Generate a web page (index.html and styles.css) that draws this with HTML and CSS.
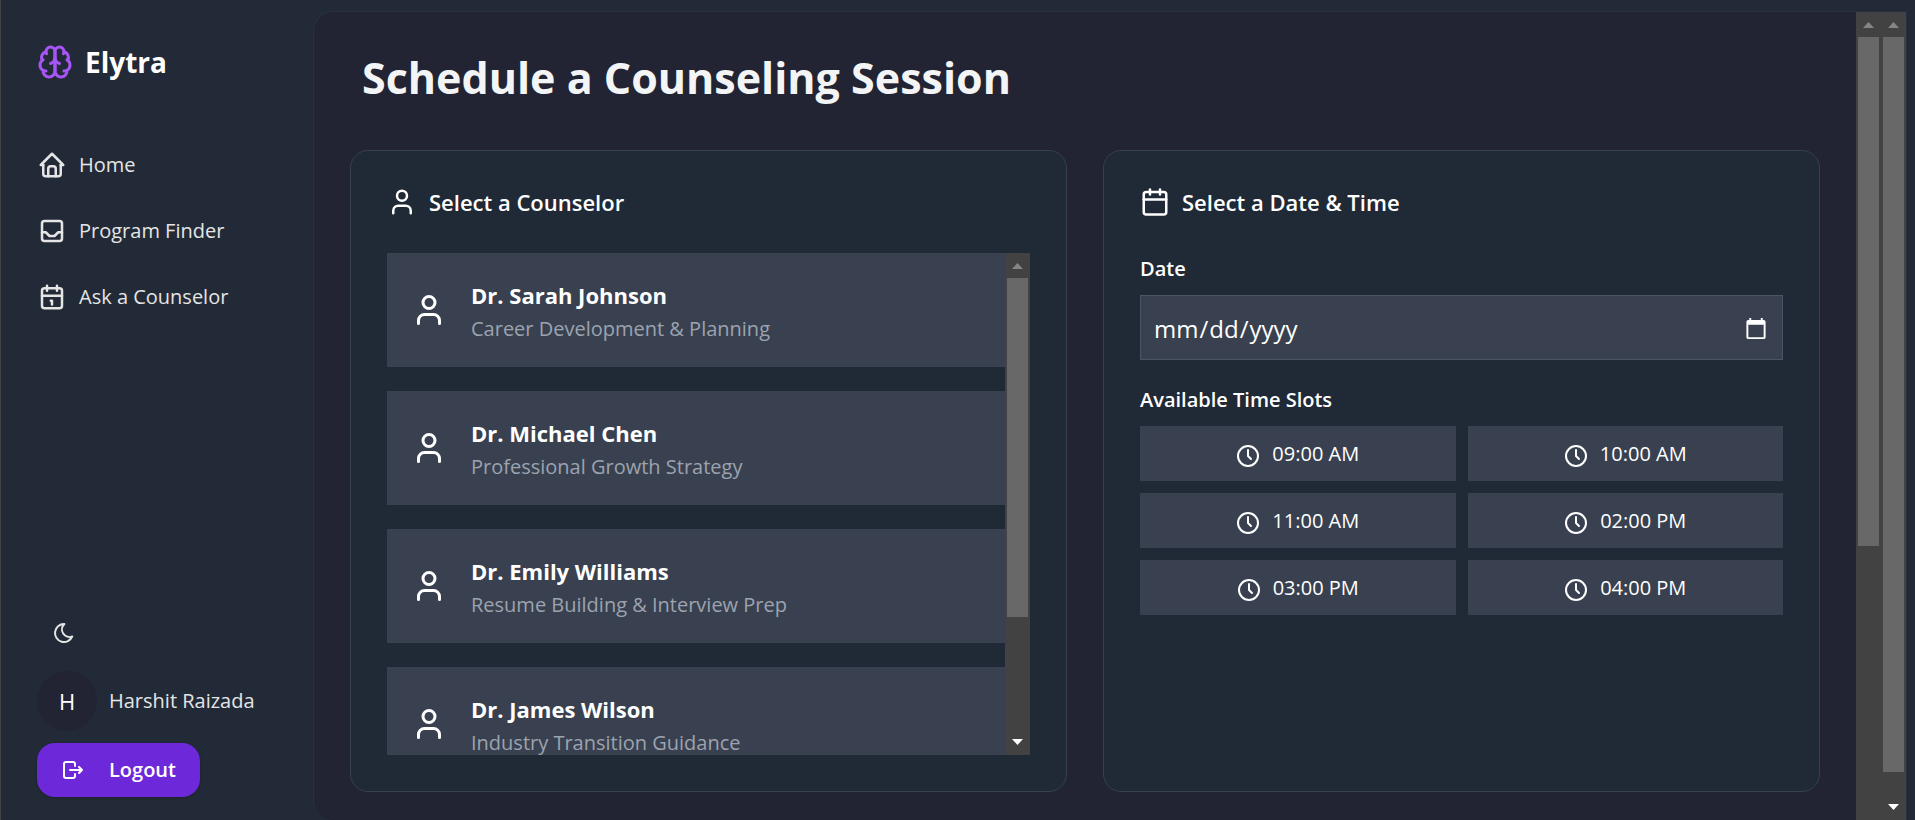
FILE: index.html
```html
<!DOCTYPE html>
<html lang="en">
<head>
<meta charset="utf-8">
<title>Elytra – Schedule a Counseling Session</title>
<link rel="stylesheet" href="styles.css">
</head>
<body>
<svg class="sprite" aria-hidden="true">
  <symbol id="user" viewBox="0 0 24 24"><path d="M19 21v-2a4 4 0 0 0-4-4H9a4 4 0 0 0-4 4v2"/><circle cx="12" cy="7" r="4"/></symbol>
  <symbol id="clock" viewBox="0 0 24 24"><circle cx="12" cy="12" r="10"/><path d="M12 6v6l3 3"/></symbol>
  <symbol id="arrow-up" viewBox="0 0 11 6"><path d="M5.5 0 11 6H0z"/></symbol>
  <symbol id="arrow-down" viewBox="0 0 11 6"><path d="M0 0h11L5.5 6z"/></symbol>
</svg>
<div class="app">
  <aside class="sidebar">
    <div>
      <a class="brand" href="#">
        <svg class="icon icon-lg" viewBox="0 0 24 24"><path d="M12 5a3 3 0 1 0-5.997.125 4 4 0 0 0-2.526 5.77 4 4 0 0 0 .556 6.588A4 4 0 1 0 12 18Z"/><path d="M12 5a3 3 0 1 1 5.997.125 4 4 0 0 1 2.526 5.77 4 4 0 0 1-.556 6.588A4 4 0 1 1 12 18Z"/><path d="M15 13a4.5 4.5 0 0 1-3-4 4.5 4.5 0 0 1-3 4"/><path d="M17.599 6.5a3 3 0 0 0 .399-1.375M6.003 5.125A3 3 0 0 0 6.401 6.5M3.477 10.896a4 4 0 0 1 .585-.396M19.938 10.5a4 4 0 0 1 .585.396M6 18a4 4 0 0 1-1.967-.516M19.967 17.484A4 4 0 0 1 18 18"/></svg>
        <span>Elytra</span>
      </a>
      <nav class="nav">
        <a href="#"><svg class="icon icon-md" viewBox="0 0 24 24"><path d="M5 12H3l9-9 9 9h-2"/><path d="M5 12v7a2 2 0 0 0 2 2h10a2 2 0 0 0 2-2v-7"/><path d="M9 21v-6a2 2 0 0 1 2-2h2a2 2 0 0 1 2 2v6"/></svg>Home</a>
        <a href="#"><svg class="icon icon-md" viewBox="0 0 24 24"><rect x="4" y="4" width="16" height="16" rx="2"/><path d="M4 13h3l3 3h4l3-3h3"/></svg>Program Finder</a>
        <a href="#"><svg class="icon icon-md" viewBox="0 0 24 24"><rect x="4" y="5" width="16" height="16" rx="2"/><path d="M16 3v4M8 3v4M4 11h16M11 15h1M12 15v3"/></svg>Ask a Counselor</a>
      </nav>
    </div>
    <div class="account">
      <button class="theme" type="button" aria-label="Toggle dark mode"><svg class="icon icon-sm" viewBox="0 0 24 24"><path d="M12 3c.132 0 .263 0 .393 0a7.5 7.5 0 0 0 7.92 12.446A9 9 0 1 1 12 2.992z"/></svg></button>
      <a class="profile" href="#"><span class="avatar">H</span>Harshit Raizada</a>
      <button class="logout" type="button"><svg class="icon icon-sm" viewBox="0 0 24 24"><path d="M14 8V6a2 2 0 0 0-2-2H5a2 2 0 0 0-2 2v12a2 2 0 0 0 2 2h7a2 2 0 0 0 2-2v-2"/><path d="M9 12h12l-3-3M18 15l3-3"/></svg>Logout</button>
    </div>
  </aside>
  <main class="panel">
    <div class="content">
      <h1>Schedule a Counseling Session</h1>
      <div class="cards">
        <section class="card">
          <h2><svg class="icon icon-md"><use href="#user"/></svg>Select a Counselor</h2>
          <div class="scroller">
            <div class="list">
              <button class="counselor" type="button"><svg class="icon icon-lg"><use href="#user"/></svg><span><strong>Dr. Sarah Johnson</strong><small>Career Development &amp; Planning</small></span></button>
              <button class="counselor" type="button"><svg class="icon icon-lg"><use href="#user"/></svg><span><strong>Dr. Michael Chen</strong><small>Professional Growth Strategy</small></span></button>
              <button class="counselor" type="button"><svg class="icon icon-lg"><use href="#user"/></svg><span><strong>Dr. Emily Williams</strong><small>Resume Building &amp; Interview Prep</small></span></button>
              <button class="counselor" type="button"><svg class="icon icon-lg"><use href="#user"/></svg><span><strong>Dr. James Wilson</strong><small>Industry Transition Guidance</small></span></button>
            </div>
            <div class="bar" aria-hidden="true"><svg class="up"><use href="#arrow-up"/></svg><div class="track"><div class="thumb thumb-list"></div></div><svg class="down"><use href="#arrow-down"/></svg></div>
          </div>
        </section>
        <section class="card">
          <h2><svg class="icon icon-md" viewBox="0 0 24 24"><rect x="3" y="4" width="18" height="18" rx="2"/><path d="M16 2v4M8 2v4M3 10h18"/></svg>Select a Date &amp; Time</h2>
          <label class="label" for="date">Date</label>
          <input class="date" id="date" type="date">
          <h3 class="label" id="slots">Available Time Slots</h3>
          <div class="slots" role="group" aria-labelledby="slots">
            <button type="button"><svg class="icon icon-sm"><use href="#clock"/></svg>09:00 AM</button>
            <button type="button"><svg class="icon icon-sm"><use href="#clock"/></svg>10:00 AM</button>
            <button type="button"><svg class="icon icon-sm"><use href="#clock"/></svg>11:00 AM</button>
            <button type="button"><svg class="icon icon-sm"><use href="#clock"/></svg>02:00 PM</button>
            <button type="button"><svg class="icon icon-sm"><use href="#clock"/></svg>03:00 PM</button>
            <button type="button"><svg class="icon icon-sm"><use href="#clock"/></svg>04:00 PM</button>
          </div>
        </section>
      </div>
    </div>
    <div class="bar" aria-hidden="true"><svg class="up"><use href="#arrow-up"/></svg><div class="track"><div class="thumb thumb-inner"></div></div></div>
    <div class="bar" aria-hidden="true"><svg class="up"><use href="#arrow-up"/></svg><div class="track"><div class="thumb thumb-outer"></div></div><svg class="down"><use href="#arrow-down"/></svg></div>
  </main>
</div>
</body>
</html>
```
FILE: styles.css
```css
* { box-sizing: border-box; }
body {
  margin: 0;
  background: #222a37;
  color: #fff;
  font-family: "Segoe UI", "Open Sans", "Noto Sans", sans-serif;
  font-size: 20px;
  line-height: 30px;
}
a { color: inherit; text-decoration: none; }
button { border: 0; color: inherit; font: inherit; cursor: pointer; }
h1, h2, h3 { margin: 0; }
.sprite { position: absolute; width: 0; height: 0; }

.icon {
  flex: none;
  fill: none;
  stroke: currentColor;
  stroke-width: 2;
  stroke-linecap: round;
  stroke-linejoin: round;
}
.icon-sm { width: 24px; height: 24px; }
.icon-md { width: 30px; height: 30px; }
.icon-lg { width: 36px; height: 36px; }

.app {
  display: flex;
  height: 100vh;
  overflow: hidden;
  border-left: 1px solid #3f4145;
}

.sidebar {
  display: flex;
  flex: none;
  flex-direction: column;
  justify-content: space-between;
  width: 312px;
  padding: 44px 36px 23px;
  color: #e5e5e5;
}
.brand { display: flex; align-items: center; gap: 12px; color: #fff; font-size: 28px; font-weight: 700; line-height: 36px; }
.brand .icon { color: #a855f7; }
.nav { display: flex; flex-direction: column; gap: 36px; margin-top: 70px; }
.nav a { display: flex; align-items: center; gap: 12px; }

.account { display: flex; flex-direction: column; align-items: flex-start; }
.theme { display: flex; padding: 14px 15px; background: none; }
.profile { display: flex; align-items: center; gap: 12px; margin: 12px 0; }
.avatar { display: grid; place-items: center; width: 60px; height: 60px; border-radius: 50%; background: #222433; color: #fff; font-size: 22px; }
.logout {
  display: flex;
  align-items: center;
  gap: 24px;
  padding: 12px 24px;
  border-radius: 18px;
  background: #6d28d9;
  color: #fff;
  font-weight: 600;
  box-shadow: 0 1px 3px rgb(0 0 0 / 20%);
}

.panel {
  display: flex;
  flex: 1;
  min-width: 0;
  margin: 11px 8px 0 0;
  overflow: hidden;
  border: 1px solid #263241;
  border-bottom: 0;
  border-radius: 20px 0 0 20px;
  background: #222433;
}
.content { flex: 1; min-width: 0; padding: 36px; }
h1 { padding: 0 12px; color: #f3f4f6; font-size: 43px; font-weight: 700; line-height: 60px; }
.cards { display: grid; grid-template-columns: 1fr 1fr; gap: 36px; margin-top: 42px; }
.card {
  min-width: 0;
  padding: 36px;
  border: 1px solid #374151;
  border-radius: 18px;
  background: #202936;
}
h2 { display: flex; align-items: center; gap: 12px; font-size: 22px; font-weight: 600; line-height: 30px; }

.scroller { display: flex; height: 502px; margin-top: 36px; overflow: hidden; }
.list { display: flex; flex: 1; flex-direction: column; gap: 24px; min-width: 0; }
.counselor {
  display: flex;
  flex: none;
  align-items: center;
  gap: 24px;
  height: 114px;
  padding: 0 24px;
  background: #394150;
  text-align: left;
}
.counselor span { padding-top: 4px; }
.counselor strong, .counselor small { display: block; line-height: 33px; }
.counselor strong { font-size: 22px; font-weight: 700; }
.counselor small { color: #9ca3af; font-size: 20px; }

.label { display: block; margin-top: 37px; font-size: 20px; font-weight: 600; line-height: 30px; }
.date {
  display: block;
  width: 100%;
  height: 65px;
  margin: 11px 0 0;
  padding: 14px 12px 12px;
  border: 1px solid #4b5563;
  border-radius: 0;
  background: #394150;
  color: #fff;
  color-scheme: dark;
  font: inherit;
  font-size: 24px;
}
.label + .slots { margin-top: 11px; }
.date + .label { margin-top: 25px; }
.slots { display: grid; grid-template-columns: 1fr 1fr; gap: 12px; }
.slots button { display: flex; align-items: center; justify-content: center; gap: 12px; padding: 12px; background: #394150; line-height: 31px; }
.slots .icon { margin-top: 4px; }

.bar { display: flex; flex: none; flex-direction: column; align-items: center; width: 25px; background: #424242; }
.bar svg { flex: none; width: 11px; height: 6px; }
.up { margin: 10px 0 9px; fill: #858585; }
.down { margin: 9px 0 10px; fill: #fff; }
.track { flex: 1; width: 21px; }
.thumb { background: #686868; }
.thumb-list { height: 75%; }
.thumb-inner { height: 65%; }
.thumb-outer { height: 97%; }
```
